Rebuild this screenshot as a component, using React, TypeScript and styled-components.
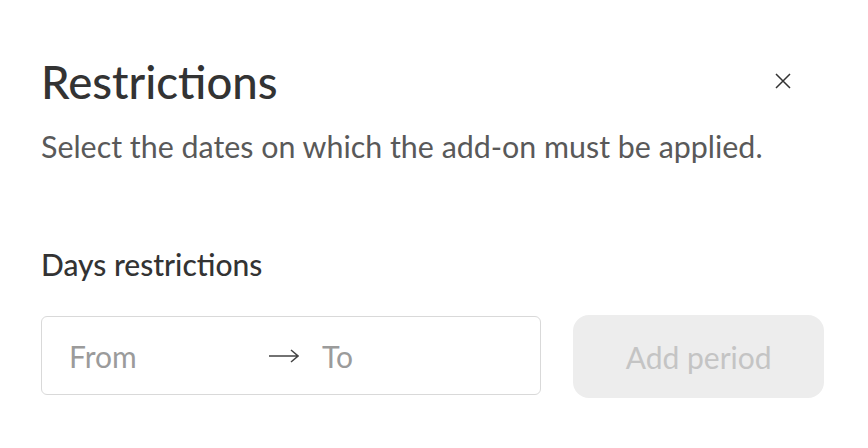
import * as React from "react";
import styled, { createGlobalStyle } from "styled-components";

const GlobalStyle = createGlobalStyle`
  html, body {
    margin: 0;
    padding: 0;
    background: #ffffff;
  }
  body {
    font-family: Lato, "Open Sans", sans-serif;
    color: #333333;
  }
`;

const Modal = styled.div`
  width: 868px;
  height: 448px;
  box-sizing: border-box;
  padding: 52px 44px 0 41px;
  display: flex;
  flex-direction: column;
`;

const Header = styled.div`
  display: flex;
  justify-content: space-between;
  align-items: flex-start;
`;

const Title = styled.h1`
  margin: 0;
  font-size: 45.5px;
  font-weight: 500;
  line-height: 60px;
  color: #333333;
`;

const CloseButton = styled.button`
  border: none;
  background: none;
  padding: 0;
  margin-top: 21px;
  margin-right: 33px;
  width: 16px;
  height: 16px;
  display: flex;
  align-items: center;
  justify-content: center;
  color: #333333;
  cursor: pointer;
`;

const Subtitle = styled.p`
  margin: 14px 0 0;
  font-size: 30.4px;
  line-height: 40px;
  color: #595959;
`;

const SectionLabel = styled.h2`
  margin: 80px 0 0;
  font-size: 30px;
  font-weight: 500;
  line-height: 36px;
  color: #333333;
`;

const Row = styled.div`
  margin-top: 33px;
  display: flex;
  align-items: flex-start;
  gap: 32px;
`;

const RangeInput = styled.div`
  width: 501px;
  height: 79px;
  margin-top: 1px;
  box-sizing: border-box;
  border: 1.5px solid #d9d9d9;
  border-radius: 6px;
  display: flex;
  align-items: center;
  padding-left: 27px;
`;

const Placeholder = styled.span<{ $width?: number }>`
  font-size: 30px;
  color: #9b9b9b;
  width: ${(p) => (p.$width ? `${p.$width}px` : "auto")};
`;

const Arrow = styled.span`
  display: flex;
  align-items: center;
  width: 53px;
`;

const AddButton = styled.button`
  width: 251px;
  height: 83px;
  border: none;
  border-radius: 16px;
  background: #ededed;
  color: #c4c4c4;
  font-family: inherit;
  font-size: 30px;
  cursor: not-allowed;
`;

export default function App() {
  return (
    <>
      <GlobalStyle />
      <Modal>
        <Header>
          <Title>Restrictions</Title>
          <CloseButton aria-label="Close">
            <svg width="16" height="16" viewBox="0 0 16 16">
              <path d="M1 1L15 15M15 1L1 15" stroke="#333" strokeWidth="1.5" />
            </svg>
          </CloseButton>
        </Header>
        <Subtitle>Select the dates on which the add-on must be applied.</Subtitle>
        <SectionLabel>Days restrictions</SectionLabel>
        <Row>
          <RangeInput>
            <Placeholder $width={200}>From</Placeholder>
            <Arrow>
              <svg width="30" height="14" viewBox="0 0 30 14">
                <path d="M0 7H29M22 1L29 7L22 13" fill="none" stroke="#444" strokeWidth="1.5" />
              </svg>
            </Arrow>
            <Placeholder>To</Placeholder>
          </RangeInput>
          <AddButton disabled>Add period</AddButton>
        </Row>
      </Modal>
    </>
  );
}
